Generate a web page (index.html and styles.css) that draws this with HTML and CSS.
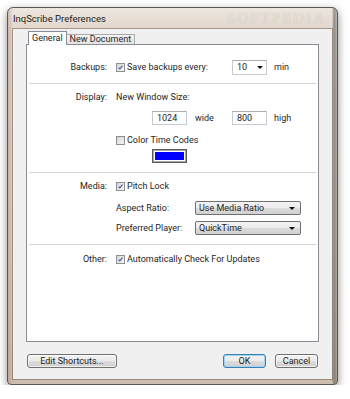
FILE: index.html
```html
<!DOCTYPE html>
<html>
<head>
  <title>InqScribe Preferences</title>
  <meta name="viewport" content="width=device-width, initial-scale=1.0">
  <link rel="stylesheet" href="styles.css">
</head>
<body>

<div class="window">
  <div class="titlebar">
    <span class="title">InqScribe Preferences</span>
    <span class="watermark">SOFTPEDIA</span>
  </div>

  <div class="client">
    <div class="tabs">
      <div class="tab active">General</div>
      <div class="tab">New Document</div>
    </div>

    <div class="panel">
      <!-- backups -->
      <div class="group g1">
        <div class="row">
          <span class="label">Backups:</span>
          <span class="check"><svg viewBox="0 0 9 9"><path d="M2 4.6 L3.7 6.4 L7 2.2"/></svg></span>
          <span class="ctext w-save">Save backups every:</span>
          <span class="combo edit">10<i class="arrow"></i></span>
          <span class="unit">min</span>
        </div>
      </div>
      <div class="sep"></div>

      <!-- display -->
      <div class="group g2">
        <div class="row">
          <span class="label">Display:</span>
          <span>New Window Size:</span>
        </div>
        <div class="row r-size">
          <span class="field">1024</span>
          <span class="unit-wide">wide</span>
          <span class="field">800</span>
          <span class="unit">high</span>
        </div>
        <div class="row r-color indent">
          <span class="check off"></span>
          <span class="ctext">Color Time Codes</span>
        </div>
        <div class="row r-swatch">
          <span class="swatch"></span>
        </div>
      </div>
      <div class="sep"></div>

      <!-- media -->
      <div class="group g3">
        <div class="row">
          <span class="label">Media:</span>
          <span class="check"><svg viewBox="0 0 9 9"><path d="M2 4.6 L3.7 6.4 L7 2.2"/></svg></span>
          <span class="ctext">Pitch Lock</span>
        </div>
        <div class="row r-aspect indent">
          <span class="sublabel">Aspect Ratio:</span>
          <span class="combo drop">Use Media Ratio<i class="arrow"></i></span>
        </div>
        <div class="row r-player indent">
          <span class="sublabel">Preferred Player:</span>
          <span class="combo drop">QuickTime<i class="arrow"></i></span>
        </div>
      </div>
      <div class="sep"></div>

      <!-- other -->
      <div class="group g4">
        <div class="row">
          <span class="label">Other:</span>
          <span class="check"><svg viewBox="0 0 9 9"><path d="M2 4.6 L3.7 6.4 L7 2.2"/></svg></span>
          <span class="ctext">Automatically Check For Updates</span>
        </div>
      </div>
    </div>

    <div class="buttons">
      <button class="btn shortcuts">Edit Shortcuts...</button>
      <button class="btn default">OK</button>
      <button class="btn">Cancel</button>
    </div>
  </div>
</div>

</body>
</html>
```

FILE: styles.css
```css
* {
  box-sizing: border-box;
}
body {
  margin: 0;
  background: #fff;
  font-family: Roboto, "Liberation Sans", sans-serif;
  font-size: 9px;
  color: #1e1e1e;
}

/* window frame */
.window {
  margin: 7px 0 0 7px;
  width: 331px;
  height: 378px;
  padding: 0 5px 5px;
  border: 1px solid #5f5650;
  border-radius: 6px 6px 4px 4px;
  background:
    linear-gradient(90deg, rgba(150,110,90,.3) 0, rgba(255,255,255,0) 5px, rgba(255,255,255,0) calc(100% - 5px), rgba(60,60,60,.5) calc(100% - 3px), rgba(90,90,90,.3) 100%),
    linear-gradient(#ede6df 0, #e0d5ca 22px, #d9ccbf 60%, #cdbdae 100%);
  box-shadow: 0 3px 9px rgba(0,0,0,.45);
  display: flex;
  flex-direction: column;
}
.titlebar {
  height: 21px;
  flex: none;
  display: flex;
  align-items: center;
}
.title {
  font-size: 9.5px;
  color: #222;
}
.watermark {
  margin-left: auto;
  margin-right: 6px;
  font-family: "Liberation Serif", serif;
  font-size: 15px;
  letter-spacing: 2px;
  color: rgba(255,255,255,.6);
  text-shadow: 0 0 1px rgba(150,130,110,.6);
}

.client {
  height: 350px;
  flex: none;
  padding: 0 13px;
  background: #f0f0f0;
  box-shadow: 0 0 0 1px rgba(90,75,65,.45);
  display: flex;
  flex-direction: column;
}

/* tabs */
.tabs {
  margin-top: 2px;
  height: 13px;
  padding-left: 2px;
  display: flex;
  align-items: flex-end;
  flex: none;
}
.tab {
  height: 10px;
  padding: 0 3px;
  border: 1px solid #a9a9a9;
  border-left: none;
  border-bottom: none;
  background: linear-gradient(#f4f4f4, #e2e2e2);
  display: flex;
  align-items: center;
  line-height: 1;
}
.tab.active {
  height: 14px;
  margin-bottom: -1px;
  padding: 0 3px 1px;
  border: 1px solid #898c95;
  border-bottom: none;
  background: #fff;
  position: relative;
  z-index: 1;
}

.panel {
  height: 298px;
  flex: none;
  background: #fff;
  border: 1px solid #898c95;
}

.sep {
  height: 1px;
  margin: 0 2px;
  background: #d3d3d3;
}

.group.g1 { padding: 14px 0 8px; }
.group.g2 { padding: 5px 0 8px; }
.group.g3 { padding: 5px 0 8px; }
.group.g4 { padding: 6px 0 0; }

.row {
  height: 16px;
  display: flex;
  align-items: center;
  white-space: nowrap;
}
.indent { padding-left: 89px; }
.r-size { margin-top: 5px; padding-left: 125px; }
.r-color { margin-top: 6px; }
.r-swatch { padding-left: 125px; }
.r-aspect { margin-top: 6px; }
.r-player { margin-top: 4px; }

.label {
  width: 80px;
  margin-right: 9px;
  text-align: right;
  flex: none;
}
.sublabel {
  width: 79px;
  flex: none;
}

/* checkbox */
.check {
  width: 9px;
  height: 9px;
  flex: none;
  margin-right: 1px;
  border: 1px solid #8e8f8f;
  background: linear-gradient(135deg, #d6d6d6, #f7f7f7);
}
.check svg {
  display: block;
  width: 7px;
  height: 7px;
}
.check path {
  fill: none;
  stroke: #3e559a;
  stroke-width: 1.4;
}
.ctext { padding-left: 1px; }
.w-save { width: 106px; flex: none; }

/* inputs */
.field {
  width: 35px;
  height: 14px;
  flex: none;
  padding-left: 4px;
  display: flex;
  align-items: center;
  background: #fff;
  border: 1px solid #c5cad3;
  border-top-color: #abadb3;
}
.unit-wide {
  width: 45px;
  padding-left: 8px;
  flex: none;
}
.unit { margin-left: 7px; }

.combo {
  height: 15px;
  flex: none;
  display: flex;
  align-items: center;
  padding-left: 4px;
}
.combo.edit {
  width: 35px;
  background: #fff;
  border: 1px solid #c5cad3;
  border-top-color: #abadb3;
}
.combo.drop {
  width: 106px;
  height: 14px;
  padding-left: 3px;
  border: 1px solid #707070;
  border-radius: 2px;
  background: linear-gradient(#f3f3f3 0, #ebebeb 50%, #dddddd 50%, #d0d0d0 100%);
}
.arrow {
  margin-left: auto;
  margin-right: 3px;
  width: 0;
  height: 0;
  border-left: 3px solid transparent;
  border-right: 3px solid transparent;
  border-top: 3px solid #111;
}
.combo.drop .arrow { margin-right: 5px; }

.swatch {
  width: 35px;
  height: 14px;
  border: 1px solid #5a5a5a;
  box-shadow: inset 0 0 0 1px #a8a8a8;
  padding: 2px;
  background: #0000ff content-box;
}

/* bottom buttons */
.buttons {
  margin-top: 12px;
  height: 14px;
  display: flex;
  gap: 9px;
  flex: none;
}
.btn {
  height: 14px;
  width: 43px;
  padding: 0;
  font-family: inherit;
  font-size: 9px;
  color: #1e1e1e;
  border: 1px solid #707070;
  border-radius: 3px;
  background: linear-gradient(#f3f3f3 0, #ebebeb 50%, #dddddd 50%, #cfcfcf 100%);
  box-shadow: inset 0 0 0 1px rgba(255,255,255,.7);
}
.btn.shortcuts {
  width: 90px;
  margin-left: 1px;
  margin-right: auto;
}
.btn.default {
  border-color: #3c7fb1;
  box-shadow: inset 0 0 0 1px #9fd5f2;
}
.btn:last-child { margin-right: 1px; }
```
